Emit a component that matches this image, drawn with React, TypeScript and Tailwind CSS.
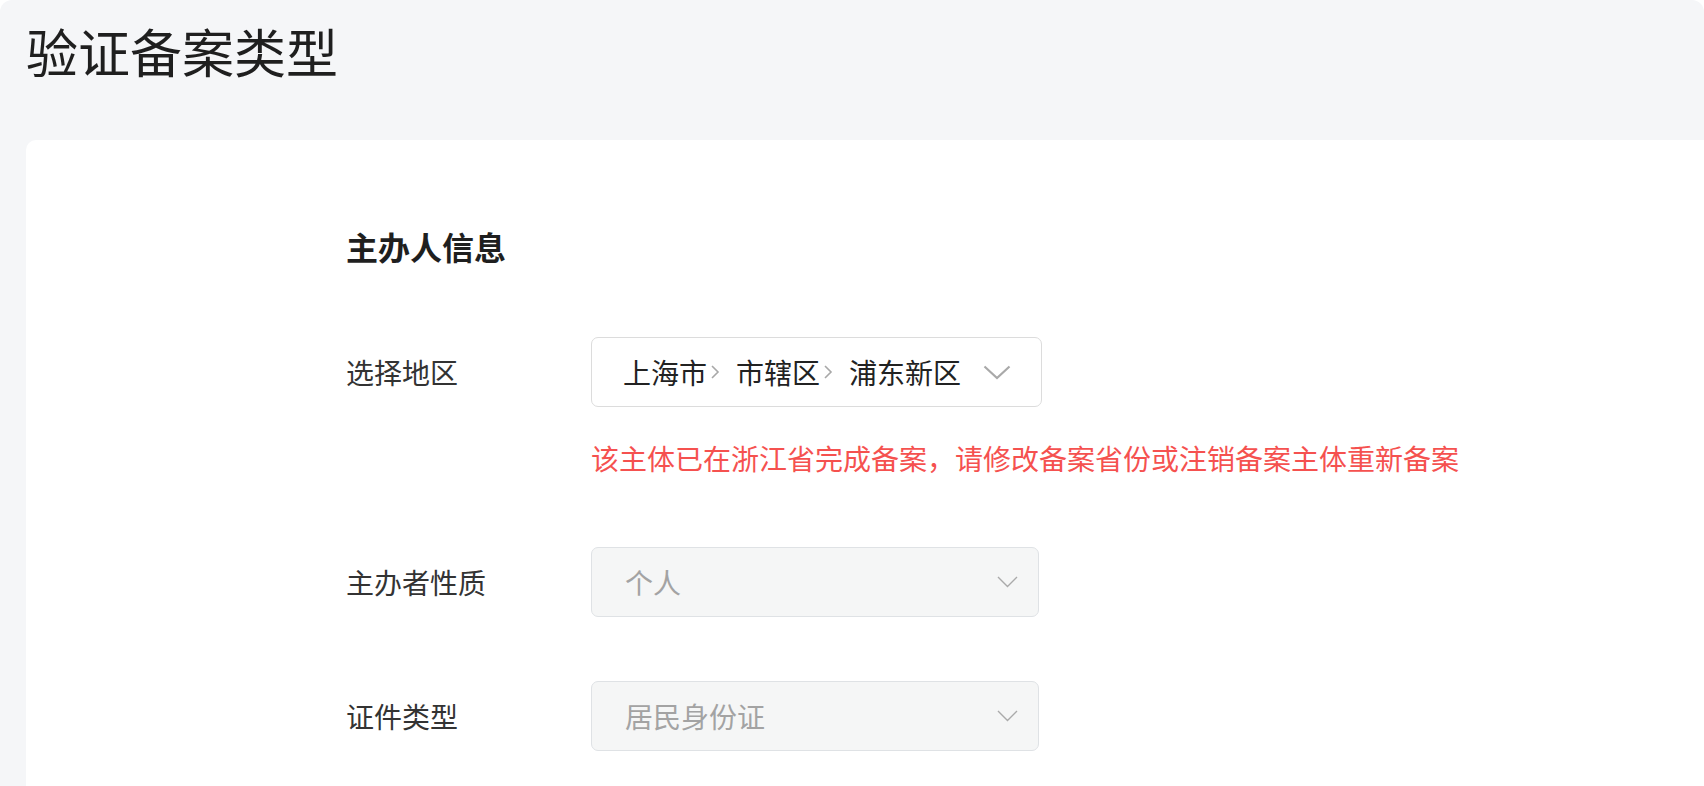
import React from "react";

const font = { fontFamily: '"Noto Sans CJK SC", "Noto Sans", sans-serif' };

const Sep: React.FC = () => (
  <svg width="10" height="18" viewBox="0 0 10 18" className="ml-[3px] mr-[16px] shrink-0">
    <path d="M2 3 L8 9 L2 15" fill="none" stroke="#a8a8a8" strokeWidth="1.6" />
  </svg>
);

const Chevron: React.FC<{ big?: boolean }> = ({ big }) =>
  big ? (
    <svg width="28" height="15" viewBox="0 0 28 15" className="shrink-0">
      <path d="M1.5 1.5 L14 13 L26.5 1.5" fill="none" stroke="#a9a9a9" strokeWidth="2.2" />
    </svg>
  ) : (
    <svg width="21" height="12" viewBox="0 0 21 12" className="shrink-0">
      <path d="M1 1 L10.5 10.5 L20 1" fill="none" stroke="#aaaaaa" strokeWidth="1.4" />
    </svg>
  );

const Row: React.FC<{ label: string; children: React.ReactNode }> = ({ label, children }) => (
  <div className="flex items-center">
    <div className="w-[245px] text-[28px] text-[#333] leading-[40px]">{label}</div>
    {children}
  </div>
);

const DisabledSelect: React.FC<{ value: string }> = ({ value }) => (
  <div className="w-[448px] h-[70px] rounded-[7px] border border-[#dfe2e5] bg-[#f5f6f6] flex items-center justify-between pl-[33px] pr-[20px]">
    <span className="text-[28px] text-[#a3a3a3] leading-[40px]">{value}</span>
    <Chevron />
  </div>
);

export default function App() {
  return (
    <div style={font} className="w-[1704px] h-[786px] bg-white overflow-hidden">
      <div className="h-full bg-[#f5f6f8] rounded-t-[12px] flex flex-col">
        <div className="h-[140px] shrink-0 pl-[26px] pt-[12px]">
          <h1 className="text-[52px] leading-[78px] text-[#1f1f1f] font-normal">验证备案类型</h1>
        </div>
        <div className="flex-1 ml-[26px] bg-white rounded-tl-[10px] pl-[320px] pt-[82px]">
          <div className="text-[32px] leading-[48px] font-semibold text-[#1f1f1f]">主办人信息</div>

          <div className="mt-[67px]">
            <Row label="选择地区">
              <div className="w-[451px] h-[70px] rounded-[7px] border border-[#dcdcdc] bg-white flex items-center justify-between pl-[31px] pr-[30px]">
                <div className="flex items-center text-[28px] text-[#222] leading-[40px]">
                  <span>上海市</span>
                  <Sep />
                  <span>市辖区</span>
                  <Sep />
                  <span>浦东新区</span>
                </div>
                <Chevron big />
              </div>
            </Row>
          </div>

          <div className="mt-[31px] pl-[245px] text-[28px] leading-[40px] text-[#f5514f]">
            该主体已在浙江省完成备案，请修改备案省份或注销备案主体重新备案
          </div>

          <div className="mt-[69px]">
            <Row label="主办者性质">
              <DisabledSelect value="个人" />
            </Row>
          </div>

          <div className="mt-[64px]">
            <Row label="证件类型">
              <DisabledSelect value="居民身份证" />
            </Row>
          </div>
        </div>
      </div>
    </div>
  );
}
